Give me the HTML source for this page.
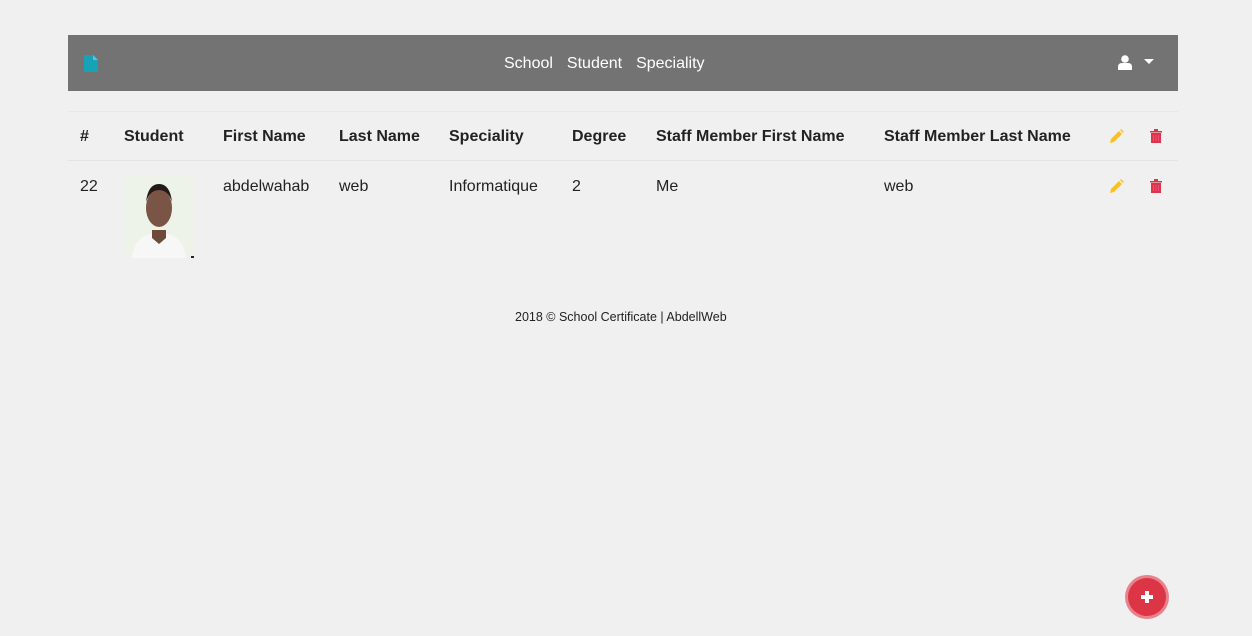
<!DOCTYPE html>
<html><head><meta charset="utf-8"><style>
body{margin:0;background:#f0f0f0;font-family:"Liberation Sans",sans-serif;color:#222;width:1252px;height:636px;position:relative;overflow:hidden}
.nav{position:absolute;left:68px;top:35px;width:1110px;height:56px;background:#737373}
.nav .links{position:absolute;left:436px;top:20px;color:#fff;font-size:16px;white-space:nowrap}
.nav .links span{margin-right:14px}
.t{position:absolute;font-size:16px;white-space:nowrap}
.h{font-weight:bold;top:128px}
.d{top:178px}
.line{position:absolute;left:68px;width:1110px;height:1px;background:#e4e4e4}
</style></head><body>
<div class="nav">
 <svg style="position:absolute;left:16px;top:20px" width="14" height="17" viewBox="0 0 14 17"><path d="M0 0H9L14 5V17H0Z" fill="#17a2b8"/><path d="M9 0V5H14" fill="#5bc4d4"/></svg>
 <div class="links"><span>School</span><span>Student</span><span>Speciality</span></div>
 <svg style="position:absolute;left:1050px;top:20px" width="14" height="15" viewBox="0 0 14 15"><circle cx="7" cy="4" r="3.8" fill="#fff"/><path d="M0 15V12Q0 8 4 8H10Q14 8 14 12V15Z" fill="#fff"/></svg>
 <svg style="position:absolute;left:1076px;top:24px" width="10" height="6"><path d="M0 0H10L5 5Z" fill="#fff"/></svg>
</div>
<div class="line" style="top:111px;background:#e8e8e8"></div>
<div class="line" style="top:160px"></div>
<div class="t h" style="left:80px">#</div>
<div class="t h" style="left:124px">Student</div>
<div class="t h" style="left:223px">First Name</div>
<div class="t h" style="left:339px">Last Name</div>
<div class="t h" style="left:449px">Speciality</div>
<div class="t h" style="left:572px">Degree</div>
<div class="t h" style="left:656px">Staff Member First Name</div>
<div class="t h" style="left:884px">Staff Member Last Name</div>
<div class="t d" style="left:80px">22</div>
<div class="t d" style="left:223px">abdelwahab</div>
<div class="t d" style="left:339px">web</div>
<div class="t d" style="left:449px">Informatique</div>
<div class="t d" style="left:572px">2</div>
<div class="t d" style="left:656px">Me</div>
<div class="t d" style="left:884px">web</div>
<svg style="position:absolute;left:124px;top:176px" width="70" height="82" viewBox="0 0 70 82"><rect width="70" height="82" fill="#eef3ea"/><path d="M8 82Q10 62 26 58H44Q60 62 62 82Z" fill="#f7f7f7"/><path d="M28 54H42V62L35 68L28 62Z" fill="#6e4a3a"/><ellipse cx="35" cy="32" rx="13" ry="19" fill="#7a5444"/><path d="M22 26Q24 8 35 8Q46 8 48 26Q44 14 35 14Q26 14 22 26Z" fill="#221a18"/><rect x="67" y="80" width="3" height="2" fill="#222"/></svg>
<svg style="position:absolute;left:1109px;top:129px" width="15" height="15" viewBox="0 0 15 15"><path d="M1 14L2 10L10 2L13 5L5 13Z" fill="#fbbf24"/><path d="M11 1L12 0L15 3L14 4Z" fill="#fbbf24"/></svg>
<svg style="position:absolute;left:1109px;top:179px" width="15" height="15" viewBox="0 0 15 15"><path d="M1 14L2 10L10 2L13 5L5 13Z" fill="#fbbf24"/><path d="M11 1L12 0L15 3L14 4Z" fill="#fbbf24"/></svg>
<svg style="position:absolute;left:1150px;top:129px" width="12" height="14" viewBox="0 0 12 14"><path d="M0 2H12V3.5H0Z M4 0H8V2H4Z" fill="#dc3545"/><path d="M1 4H11V14H1Z" fill="#dc3545"/><path d="M3.5 6V12M6 6V12M8.5 6V12" stroke="#f6c" stroke-width=".8" opacity=".6"/></svg>
<svg style="position:absolute;left:1150px;top:179px" width="12" height="14" viewBox="0 0 12 14"><path d="M0 2H12V3.5H0Z M4 0H8V2H4Z" fill="#dc3545"/><path d="M1 4H11V14H1Z" fill="#dc3545"/><path d="M3.5 6V12M6 6V12M8.5 6V12" stroke="#f6c" stroke-width=".8" opacity=".6"/></svg>
<div class="t" style="left:515px;top:310px;font-size:12.5px">2018 © School Certificate | AbdellWeb</div>
<div style="position:absolute;left:1125px;top:575px;width:44px;height:44px;border-radius:50%;background:#e8838e"></div>
<div style="position:absolute;left:1128px;top:578px;width:38px;height:38px;border-radius:50%;background:#dc3545"></div>
<svg style="position:absolute;left:1141px;top:591px" width="12" height="12"><path d="M4 0H8V4H12V8H8V12H4V8H0V4H4Z" fill="#fff"/></svg>
</body></html>
